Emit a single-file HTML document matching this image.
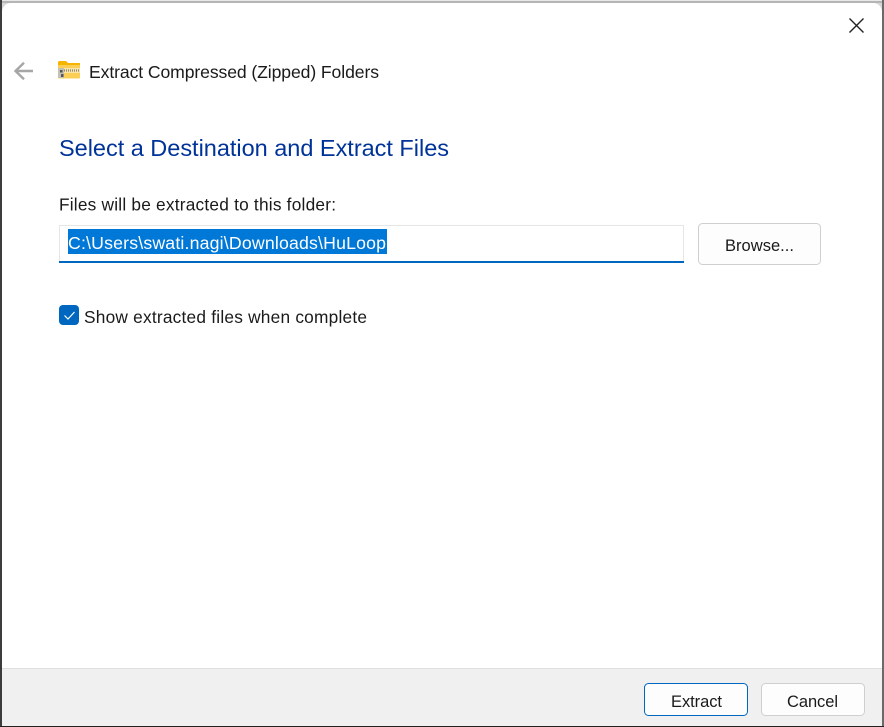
<!DOCTYPE html>
<html><head><meta charset="utf-8">
<style>
html,body{margin:0;padding:0;width:884px;height:727px;overflow:hidden;background:#fff}
svg{display:block}
text{font-family:"Liberation Sans",sans-serif;fill:#1a1a1a}
</style></head>
<body>
<svg width="884" height="727" viewBox="0 0 884 727" xmlns="http://www.w3.org/2000/svg">
<rect width="884" height="727" fill="#d8d8d8"/>
<rect x="0" y="0" width="884" height="1" fill="#e8e8e8"/>
<rect x="0" y="1" width="884" height="2" fill="#b5b5b5"/>
<rect x="0" y="0" width="2" height="727" fill="#3c3c3c"/>
<rect x="882" y="0" width="2" height="727" fill="#6a6a6a"/>
<rect x="0" y="726" width="884" height="1" fill="#222"/>
<path d="M2 12a9 9 0 0 1 9-9H873a9 9 0 0 1 9 9V726H2Z" fill="#fff"/>
<rect x="2" y="668" width="880" height="58" fill="#f0f0f0"/>
<rect x="2" y="668" width="880" height="1" fill="#dfdfdf"/>

<path d="M15.500 71H33M24 62.800l-8.500 8.200 8.500 8.200" fill="none" stroke="#a6a6a6" stroke-width="2.400"/>
<path d="M58 63a2 2 0 0 1 1-2h7l2 2h12v3H58Z" fill="#f4b400"/>
<rect x="58" y="65" width="22" height="13.500" rx="1" fill="#fbcf55"/>
<rect x="58" y="68" width="22" height="5" fill="#f9e4a6"/>
<path d="M64 70.500H80" stroke="#8f8a78" stroke-width="2.200" stroke-dasharray="1 1"/>
<rect x="58" y="68" width="6" height="10" fill="#c4c0b4"/>
<rect x="60" y="70" width="2.500" height="2.500" fill="#555"/>
<rect x="61" y="74" width="2.500" height="3" fill="#555"/>

<text x="89" y="78" font-size="17.600" textLength="290" lengthAdjust="spacing">Extract Compressed (Zipped) Folders</text>
<text x="59" y="156" font-size="23.500" textLength="390" lengthAdjust="spacing" style="fill:#003399">Select a Destination and Extract Files</text>
<text x="59" y="210.500" font-size="17.300" textLength="277" lengthAdjust="spacing">Files will be extracted to this folder:</text>

<rect x="59.500" y="225.500" width="624" height="37" fill="#fff" stroke="#e6e6e6"/>
<rect x="59" y="261" width="625" height="2" fill="#0067c0"/>
<rect x="68" y="229" width="319" height="25" fill="#0078d7"/>
<text x="68" y="249" font-size="17.700" textLength="318" lengthAdjust="spacing" style="fill:#fff">C:\Users\swati.nagi\Downloads\HuLoop</text>

<rect x="698.500" y="223.500" width="122" height="41" rx="4" fill="#fdfdfd" stroke="#cfcfcf"/>
<text x="725" y="251" font-size="16.500" textLength="69" lengthAdjust="spacing">Browse...</text>

<rect x="59" y="305" width="20" height="20" rx="4" fill="#0067c0"/>
<path d="M64.500 315.500l3.500 3.500 6.500-7" fill="none" stroke="#fff" stroke-width="1.200"/>
<text x="84" y="323" font-size="17.300" textLength="283" lengthAdjust="spacing">Show extracted files when complete</text>

<path d="M849.500 18.500l14 14M863.500 18.500l-14 14" fill="none" stroke="#222" stroke-width="1.400"/>

<rect x="644.500" y="683.500" width="103" height="32" rx="4" fill="#fdfdfd" stroke="#0067c0"/>
<text x="671" y="707" font-size="16.500" textLength="51" lengthAdjust="spacing">Extract</text>
<rect x="761.500" y="683.500" width="103" height="32" rx="4" fill="#fdfdfd" stroke="#cfcfcf"/>
<text x="787" y="707" font-size="16.500" textLength="51" lengthAdjust="spacing">Cancel</text>
</svg>
</body></html>
